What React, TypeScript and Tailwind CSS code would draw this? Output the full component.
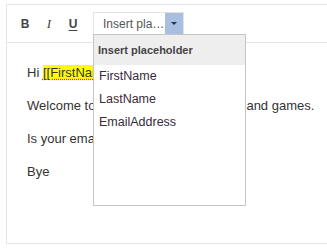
import React from 'react';

const placeholders = ['FirstName', 'LastName', 'EmailAddress'];

const ToolButton: React.FC<{ children: React.ReactNode; className?: string }> = ({ children, className }) => (
  <button className={`w-[24px] h-[24px] flex items-center justify-center text-[12px] text-[#444] ${className ?? ''}`}>
    {children}
  </button>
);

const App: React.FC = () => {
  return (
    <div className="relative w-[327px] h-[251px] overflow-hidden bg-white font-['Liberation_Sans',Arial,sans-serif]">
      <div className="ml-[6px] mt-[4px] w-[340px] h-[240px] border border-[#e6e6e6]">
        {/* Toolbar */}
        <div className="h-[38px] border-b border-[#e6e6e6] flex items-center pl-[6px]">
          <ToolButton className="font-bold">B</ToolButton>
          <ToolButton className="italic font-['Liberation_Serif',serif] text-[13px]">I</ToolButton>
          <ToolButton className="font-bold underline underline-offset-2">U</ToolButton>
          <div className="ml-[8px] h-[24px] w-[91px] border border-[#e3e3e3] flex items-stretch">
            <span className="flex-1 min-w-0 pl-[9px] text-[12px] leading-[22px] text-[#555] truncate">
              Insert placeholder
            </span>
            <span className="w-[18px] shrink-0 bg-[#a6bfe3] flex items-center justify-center">
              <span className="w-0 h-0 border-l-[3px] border-r-[3px] border-t-[3px] border-l-transparent border-r-transparent border-t-[#333]" />
            </span>
          </div>
        </div>

        {/* Content */}
        <div className="pl-[20px] pt-[20px] text-[13px] leading-[20px] text-[#333] whitespace-nowrap">
          <p className="mb-[13px]">
            Hi{' '}
            <span className="bg-[#ffff00] underline decoration-dotted decoration-[#e03030] underline-offset-2">
              [[FirstName]]
            </span>
            ,
          </p>
          <p className="mb-[13px]">Welcome to our newsletter of puzzles and games.</p>
          <p className="mb-[13px]">Is your email [[EmailAddress]]?</p>
          <p>Bye</p>
        </div>
      </div>

      {/* Dropdown menu */}
      <div className="absolute left-[93px] top-[34px] w-[153px] h-[172px] bg-white border border-[#c6c6c6]">
        <div className="h-[30px] bg-[#eeeeee] pl-[4px] text-[11px] font-bold leading-[30px] text-[#444]">
          Insert placeholder
        </div>
        <ul>
          {placeholders.map((p) => (
            <li key={p} className="h-[23px] pl-[5px] text-[12.5px] leading-[23px] text-[#3a2a3a]">
              {p}
            </li>
          ))}
        </ul>
      </div>
    </div>
  );
};

export default App;
